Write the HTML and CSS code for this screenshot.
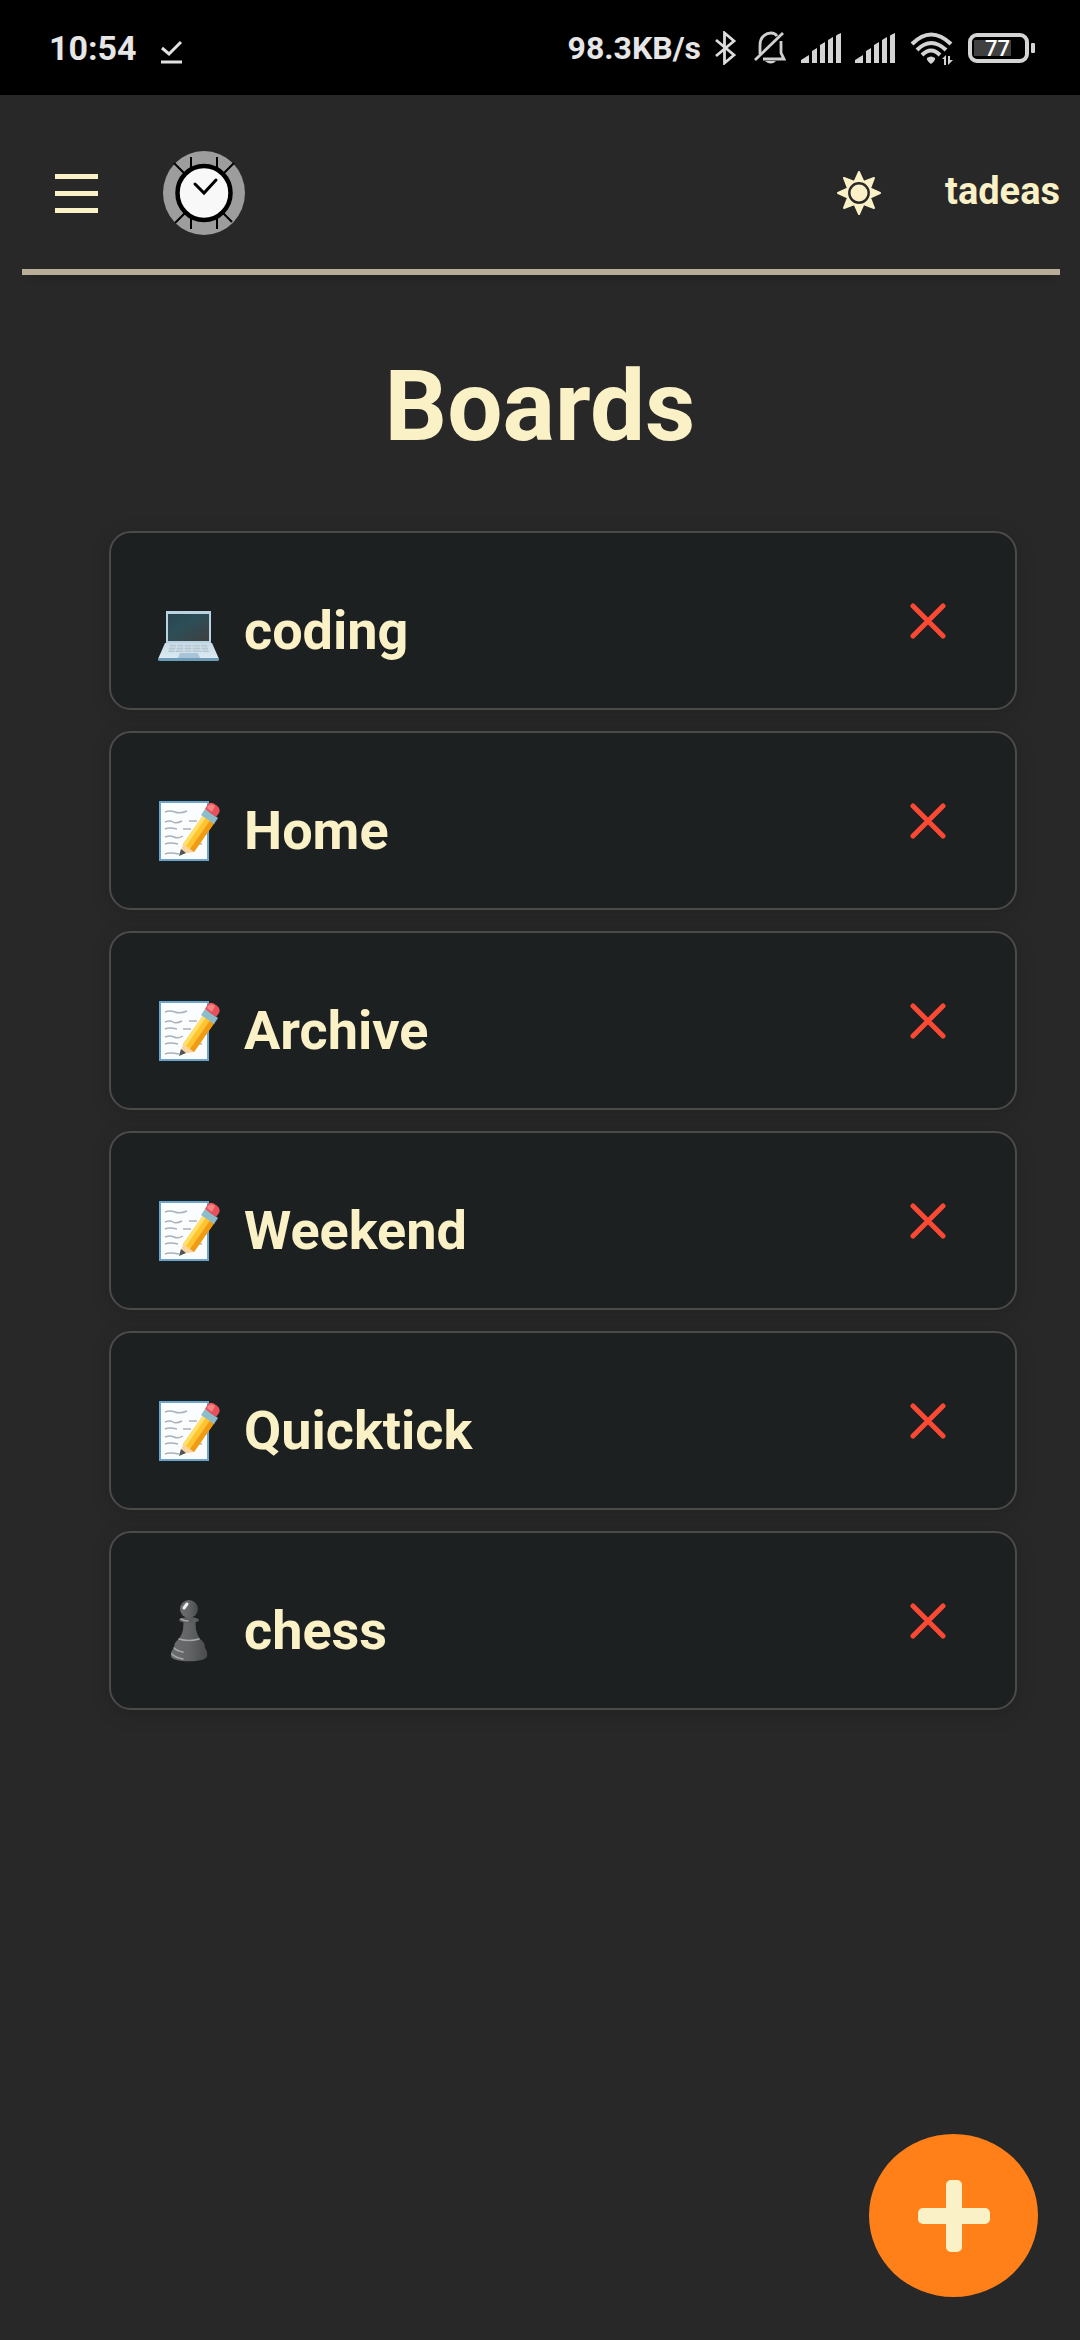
FILE: index.html
```html
<!DOCTYPE html>
<html lang="en">
<head>
<meta charset="utf-8">
<meta name="viewport" content="width=device-width, initial-scale=1">
<title>Boards</title>
<link rel="stylesheet" href="styles.css">
</head>
<body>
<svg class="sprite" aria-hidden="true">
  <defs>
    <linearGradient id="screen" x1="0" y1="0" x2="1" y2="1">
      <stop offset="0" stop-color="#2b4450"/><stop offset=".4" stop-color="#2c4e57"/><stop offset="1" stop-color="#403f42"/>
    </linearGradient>
    <linearGradient id="keys" x1="0" y1="0" x2="0" y2="1">
      <stop offset="0" stop-color="#c9dbe6"/><stop offset="1" stop-color="#dcebf4"/>
    </linearGradient>
    <linearGradient id="pawn" x1="0" y1="0" x2="1" y2="0">
      <stop offset="0" stop-color="#6b6d6e"/><stop offset=".5" stop-color="#626465"/><stop offset="1" stop-color="#484a4b"/>
    </linearGradient>
  </defs>
  <symbol id="signal" viewBox="0 0 40 34">
    <path fill="#d4d4d4" d="M0 32V29L8 24V32ZM11 32V20L16 17V32ZM19 32V14L24 11V32ZM27 32V9L32 6V32ZM35 32V5Q35 4 40 2V32Z"/>
  </symbol>
  <symbol id="laptop" viewBox="0 0 64 64">
    <path fill="#b9d3e0" d="M9 12H54V45H9Z"/>
    <path fill="url(#screen)" d="M11 15H52V42H11Z"/>
    <path fill="url(#keys)" d="M8 44H55L62 60H1Z"/>
    <path fill="#b4c6d2" d="M13 46H50L52 53H11Z"/>
    <path stroke="#d6e4ed" d="M12 48H51M11 51H52M20 46L18 53M27 46V53M35 46V53M43 46L45 53"/>
    <path fill="#a9c4d7" d="M23 54H41L43 59H21Z"/>
    <path fill="#6d9db7" d="M1 59H62V61Q62 62 60 62H3Q1 62 1 61Z"/>
  </symbol>
  <symbol id="memo" viewBox="0 0 64 64">
    <path fill="#fbfcfe" stroke="#69a5cc" stroke-width="2" d="M3 3H51V61H3Z"/>
    <path fill="none" stroke="#a9b2bb" stroke-width="1.4" d="M8 13q5-2 10 0t12-1M8 23q5-2 8 0t9-1M32 22h8M8 30q4-2 12 0M26 30h8M8 38q5-2 9 0t9-1M8 45q5-2 13 0M38 45h7M8 55q4-2 14 0"/>
    <path fill="#f9d3a0" d="M26 45L37 53L23 55Z"/>
    <path fill="#4c535b" d="M24 50L29 54L22 57Z"/>
    <path fill="#ffc431" d="M26 45L47 15L58 23L37 53Z"/>
    <path fill="#f09b13" d="M33 50L54 20L58 23L37 53Z"/>
    <path fill="#ffe06a" d="M26 45L47 15L50 17L29 47Z"/>
    <path fill="#8dbccb" d="M44 16L48 10L61 19L57 25Z"/>
    <path fill="#e9515a" d="M48 10L51 5Q54 2 59 6Q64 9 62 14L59 18Z"/>
    <path fill="#f48384" d="M50 9L52 6Q55 4 58 7L55 13Z"/>
  </symbol>
  <symbol id="chess" viewBox="0 0 64 64">
    <path fill="url(#pawn)" d="M26 20H39Q37 31 43 40Q48 43 48 49Q51 53 50 57C50 64 14 64 14 57Q13 53 17 49Q17 43 22 40Q28 31 26 20Z"/>
    <ellipse cx="32" cy="21" rx="10" ry="3" fill="#5b5d5e"/>
    <circle cx="32" cy="10" r="9" fill="url(#pawn)"/>
    <path fill="none" stroke="#a6a7a8" stroke-width="1.6" stroke-linecap="round" d="M22 40Q32 43 42 40M24 20Q27 22 31 22M17 49Q20 52 26 53M15 55Q19 59 26 60"/>
    <path stroke="#f0f0f0" stroke-width="3" stroke-linecap="round" d="M27 9L30 5"/>
  </symbol>
  <symbol id="cross" viewBox="0 0 36 36">
    <path stroke="#fb4934" stroke-width="5" stroke-linecap="round" d="M3 3L33 33M33 3L3 33"/>
  </symbol>
</svg>

<div class="status">
  <span class="clock">10:54</span>
  <svg class="done" width="22" height="24" viewBox="0 0 22 24" fill="none" stroke="#e2e2e2" stroke-width="3"><path d="M1 8L8 14L20 2M0 22H21"/></svg>
  <div class="indicators">
    <span class="speed">98.3KB/s</span>
    <svg width="24" height="34" viewBox="0 0 24 34" fill="none" stroke="#dcdcdc" stroke-width="2.800"><path d="M1 9L19 24L9.500 32V2L19 10L1 25"/></svg>
    <svg width="34" height="34" viewBox="0 0 34 34" fill="none" stroke="#cfcfcf" stroke-width="2.800"><path d="M7 23V14C7 5 14 2 18 2Q22 2 24 5M28 10V22L31 28H10M2 29L30 2"/><path fill="#cfcfcf" stroke="none" d="M12 30H23Q18 35 12 30Z"/></svg>
    <svg width="40" height="34"><use href="#signal"/></svg>
    <svg width="40" height="34"><use href="#signal"/></svg>
    <svg width="44" height="36" viewBox="0 0 44 36" fill="none" stroke="#d4d4d4" stroke-width="4"><path d="M3 14Q22-5 42 14M8 20Q22 6 37 20M13 25Q22 16 31 25"/><path fill="#d4d4d4" stroke="none" d="M18 28Q22 25 26 28Q27 30 22 34Q17 30 18 28ZM33 29L37 25V35H35V29ZM39 26H41V30L44 30L39 35Z"/></svg>
    <svg width="68" height="34" viewBox="0 0 68 34"><rect x="3" y="4" width="57" height="26" rx="7" fill="none" stroke="#d4d4d4" stroke-width="4"/><rect x="7" y="9" width="37" height="16" fill="#404040"/><rect x="64" y="12" width="4" height="10" rx="1" fill="#d4d4d4"/><text class="charge" x="18" y="25">77</text></svg>
  </div>
</div>

<header class="topbar">
  <button class="menu" aria-label="Menu"><span></span><span></span><span></span></button>
  <a class="logo" href="#" aria-label="Quicktick">
    <svg width="82" height="84" viewBox="0 0 82 84">
      <ellipse cx="41" cy="42" rx="41" ry="42" fill="#9d9d9d"/>
      <path stroke="#000" stroke-width="2" d="M28 6V18M54 6V18M28 66V78M54 66V78M11 12L22 23M71 12L60 23M12 72L23 61M69 71L59 61"/>
      <path d="M20 24L28 15L34 18L24 27ZM48 18L54 15L63 24L58 27ZM21 60L25 58L33 67L28 68ZM57 58L62 60L54 68L49 67Z"/>
      <ellipse cx="41" cy="42" rx="26.500" ry="27" fill="#f8f8f8" stroke="#000" stroke-width="4.500"/>
      <path fill="none" stroke="#000" stroke-width="3" stroke-linecap="round" d="M32 33L41 42L53 29"/>
    </svg>
  </a>
  <button class="theme" aria-label="Toggle theme">
    <svg width="44" height="44" viewBox="0 0 44 44">
      <path fill="#fbf1c7" stroke="#fbf1c7" stroke-width="2" stroke-linejoin="round" d="M22 1L26.500 11L37 7L33 17.500L43 22L33 26.500L37 37L26.500 33L22 43L17.500 33L7 37L11 26.500L1 22L11 17.500L7 7L17.500 11Z"/>
      <circle cx="22" cy="22" r="9.700" fill="#fbf1c7" stroke="#282828" stroke-width="2.400"/>
    </svg>
  </button>
  <a class="user" href="#">tadeas</a>
</header>

<main>
  <h1>Boards</h1>
  <ul class="boards">
    <li class="board"><a href="#"><svg class="emoji"><use href="#laptop"/></svg>coding</a><button class="remove" aria-label="Delete coding"><svg><use href="#cross"/></svg></button></li>
    <li class="board"><a href="#"><svg class="emoji"><use href="#memo"/></svg>Home</a><button class="remove" aria-label="Delete Home"><svg><use href="#cross"/></svg></button></li>
    <li class="board"><a href="#"><svg class="emoji"><use href="#memo"/></svg>Archive</a><button class="remove" aria-label="Delete Archive"><svg><use href="#cross"/></svg></button></li>
    <li class="board"><a href="#"><svg class="emoji"><use href="#memo"/></svg>Weekend</a><button class="remove" aria-label="Delete Weekend"><svg><use href="#cross"/></svg></button></li>
    <li class="board"><a href="#"><svg class="emoji"><use href="#memo"/></svg>Quicktick</a><button class="remove" aria-label="Delete Quicktick"><svg><use href="#cross"/></svg></button></li>
    <li class="board"><a href="#"><svg class="emoji"><use href="#chess"/></svg>chess</a><button class="remove" aria-label="Delete chess"><svg><use href="#cross"/></svg></button></li>
  </ul>
</main>

<button class="add" aria-label="Add board">
  <svg width="72" height="72" viewBox="0 0 72 72" fill="#fbf1c7"><rect x="28" width="16" height="72" rx="5"/><rect y="28" width="72" height="16" rx="5"/></svg>
</button>
</body>
</html>
```
FILE: styles.css
```css
* {
  box-sizing: border-box;
}

body {
  margin: 0;
  min-height: 100vh;
  background: #282828;
  color: #fbf1c7;
  font-family: Roboto, "Liberation Sans", sans-serif;
  font-weight: 700;
}

button {
  padding: 0;
  border: 0;
  background: none;
  color: inherit;
  font: inherit;
  cursor: pointer;
}

a {
  color: inherit;
  text-decoration: none;
}

svg {
  display: block;
  flex: none;
}

.sprite {
  position: absolute;
  width: 0;
  height: 0;
}

/* Device status bar */
.status {
  display: flex;
  align-items: center;
  height: 95px;
  padding: 0 45px 0 49px;
  background: #000;
  color: #e6e6e6;
}

.clock {
  font-size: 34px;
  line-height: 40px;
}

.done {
  margin: 8px 0 0 24px;
}

.indicators {
  display: flex;
  align-items: center;
  gap: 14px;
  margin-left: auto;
}

.speed {
  font-size: 32px;
  line-height: 40px;
}

.charge {
  fill: #fff;
  font-size: 22px;
  font-weight: 500;
}

/* Navigation */
.topbar {
  display: flex;
  align-items: center;
  height: 180px;
  margin: 0 20px 0 22px;
  padding: 22px 0 0 33px;
  border-bottom: 6px solid #b8ad98;
  box-shadow: 0 10px 10px -8px rgba(0, 0, 0, 0.2);
}

.menu {
  display: grid;
  gap: 12px;
  width: 43px;
}

.menu span {
  height: 5px;
  background: #fbf1c7;
}

.logo {
  margin-left: 65px;
}

.theme {
  margin-left: auto;
}

.user {
  margin-left: 64px;
  padding-bottom: 4px;
  font-size: 38px;
  line-height: 44px;
}

/* Board list */
h1 {
  margin: 72px 0 64px;
  font-size: 98px;
  line-height: 120px;
  text-align: center;
}

.boards {
  display: grid;
  gap: 21px;
  margin: 0;
  padding: 0 63px 160px 109px;
  list-style: none;
}

.board {
  display: flex;
  align-items: center;
  height: 179px;
  padding: 0 51px 0 46px;
  border: 2px solid #4b4a49;
  border-radius: 22px;
  background: #1d2021;
  box-shadow: 0 4px 20px rgba(0, 0, 0, 0.15);
}

.board a {
  display: flex;
  flex: 1;
  align-items: center;
  gap: 23px;
  padding-top: 20px;
  font-size: 54px;
  line-height: 64px;
}

.emoji {
  width: 64px;
  height: 64px;
}

.remove {
  display: grid;
  place-items: center;
  width: 72px;
  height: 72px;
}

.remove svg {
  width: 36px;
  height: 36px;
}

.add {
  position: fixed;
  right: 42px;
  bottom: 43px;
  display: grid;
  place-items: center;
  width: 169px;
  height: 163px;
  border-radius: 50%;
  background: #ff8019;
}
```
